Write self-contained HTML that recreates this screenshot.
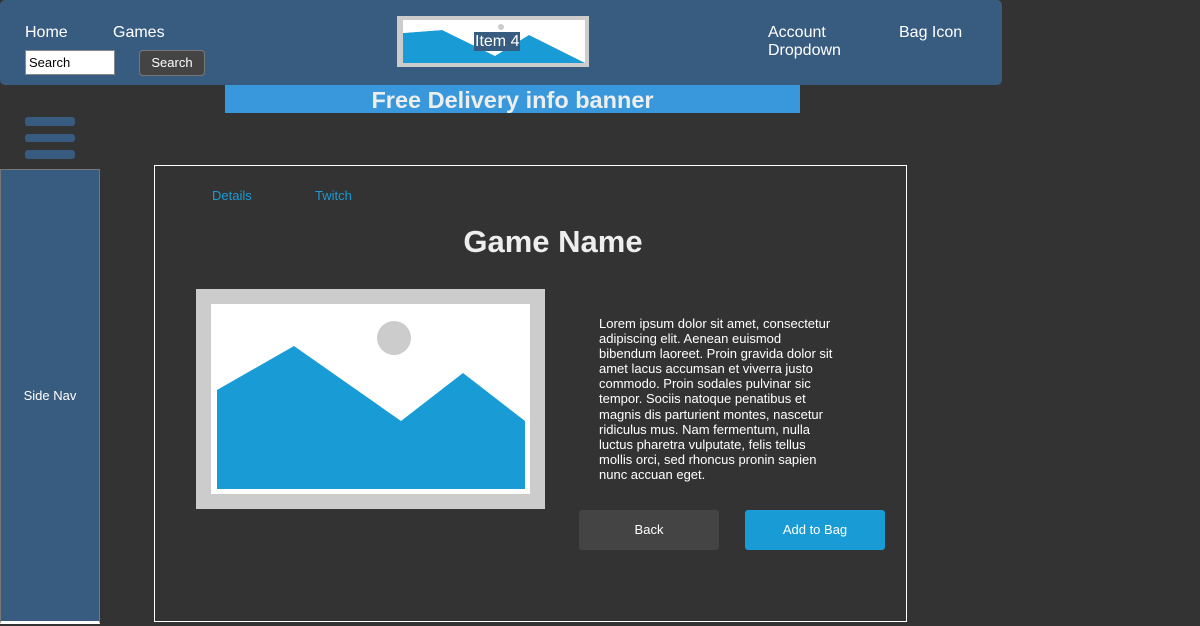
<!DOCTYPE html>
<html><head><style>
body{margin:0;width:1200px;height:626px;background:#333;position:relative;overflow:hidden;font-family:"Liberation Sans",sans-serif;color:#fff}
.a{position:absolute}
</style></head><body>
<div class="a" style="left:0;top:0;width:1002px;height:85px;background:#385c80;border-radius:5px"></div>
<div class="a" style="left:25px;top:24px;font-size:16px">Home</div>
<div class="a" style="left:113px;top:24px;font-size:16px">Games</div>
<div class="a" style="left:25px;top:50px;background:#fff;border:1px solid #888;color:#000;font-size:13px;line-height:23px;padding-left:3px;box-sizing:border-box;width:90px;height:25px">Search</div>
<div class="a" style="left:139px;top:50px;width:64px;height:24px;background:#444;border:1px solid #777;border-radius:4px;font-size:13px;text-align:center;line-height:24px">Search</div>
<div class="a" style="left:397px;top:16px;width:192px;height:51px;background:#ccc"></div>
<div class="a" style="left:403px;top:20px;width:182px;height:43px;background:#fff;overflow:hidden">
<svg width="182" height="43"><circle cx="98" cy="7" r="3" fill="#ccc"/><polygon points="0,13 39,10 92,36 126,15 182,43 0,43" fill="#199bd6"/><polygon points="0,13 39,10 0,10" fill="#fff"/></svg></div>
<div class="a" style="left:474px;top:32px;background:#385c80;font-size:16px;line-height:19px;padding:0 1px">Item 4</div>
<div class="a" style="left:768px;top:24px;font-size:16px;line-height:18px">Account<br>Dropdown</div>
<div class="a" style="left:899px;top:24px;font-size:16px">Bag Icon</div>
<div class="a" style="left:225px;top:85px;width:575px;height:28px;background:#3898db;text-align:center;font-weight:bold;font-size:23.5px;line-height:31px;color:#eee">Free Delivery info banner</div>
<div class="a" style="left:25px;top:117px;width:50px;height:9px;background:#385c80;border-radius:3px"></div>
<div class="a" style="left:25px;top:134px;width:50px;height:8px;background:#385c80;border-radius:3px"></div>
<div class="a" style="left:25px;top:150px;width:50px;height:9px;background:#385c80;border-radius:3px"></div>
<div class="a" style="left:0;top:169px;width:98px;height:451px;background:#385c80;border:1px solid #777;border-bottom:3px solid #fff;font-size:13px;text-align:center;line-height:452px">Side Nav</div>
<div class="a" style="left:154px;top:165px;width:751px;height:455px;border:1px solid #fff"></div>
<div class="a" style="left:212px;top:188px;font-size:13px;color:#199bd6">Details</div>
<div class="a" style="left:315px;top:188px;font-size:13px;color:#199bd6">Twitch</div>
<div class="a" style="left:154px;top:224px;width:798px;text-align:center;font-weight:bold;font-size:31px;color:#eee">Game Name</div>
<div class="a" style="left:196px;top:289px;width:349px;height:220px;background:#ccc"></div>
<div class="a" style="left:211px;top:304px;width:319px;height:190px;background:#fff">
<svg width="319" height="190"><circle cx="183" cy="34" r="17" fill="#ccc"/><polygon points="6,86 83,42 190,117 252,69 314,117 314,185 6,185" fill="#199bd6"/></svg></div>
<div class="a" style="left:599px;top:316px;width:238px;font-size:13px;line-height:15.1px">Lorem ipsum dolor sit amet, consectetur adipiscing elit. Aenean euismod bibendum laoreet. Proin gravida dolor sit amet lacus accumsan et viverra justo commodo. Proin sodales pulvinar sic tempor. Sociis natoque penatibus et magnis dis parturient montes, nascetur ridiculus mus. Nam fermentum, nulla luctus pharetra vulputate, felis tellus mollis orci, sed rhoncus pronin sapien nunc accuan eget.</div>
<div class="a" style="left:579px;top:510px;width:140px;height:40px;background:#444;border-radius:3px;font-size:13px;text-align:center;line-height:40px">Back</div>
<div class="a" style="left:745px;top:510px;width:140px;height:40px;background:#199bd6;border-radius:3px;font-size:13px;text-align:center;line-height:40px">Add to Bag</div>
</body></html>
